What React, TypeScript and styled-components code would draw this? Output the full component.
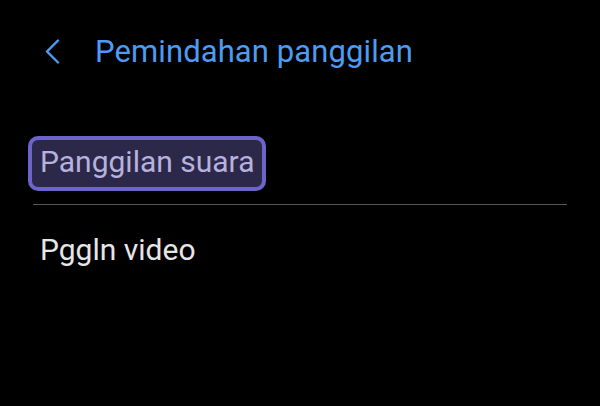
import React from "react";
import styled, { createGlobalStyle } from "styled-components";

const Global = createGlobalStyle`
  html, body { margin: 0; padding: 0; background: #000; }
  body { font-family: Roboto, "Noto Sans", sans-serif; width: 600px; height: 406px; overflow: hidden; }
`;

const Page = styled.div`
  display: flex;
  flex-direction: column;
  width: 600px;
  height: 406px;
  background: #000;
`;

const Header = styled.header`
  display: flex;
  align-items: center;
  padding: 34px 0 0 44px;
  height: 36px;
`;

const BackButton = styled.button`
  display: flex;
  align-items: center;
  justify-content: center;
  width: 17px;
  height: 36px;
  padding: 0;
  margin: 0 34px 0 0;
  background: none;
  border: none;
  color: #4b9cf2;
`;

const Title = styled.h1`
  margin: 0;
  font-family: Roboto, sans-serif;
  font-weight: 400;
  font-size: 31px;
  line-height: 36px;
  letter-spacing: 0.1px;
  color: #4b9cf2;
`;

const List = styled.div`
  display: flex;
  flex-direction: column;
  margin-top: 66px;
`;

const Item = styled.div<{ $focused?: boolean }>`
  align-self: flex-start;
  font-family: Roboto, sans-serif;
  font-size: 30px;
  line-height: 36px;
  color: ${(p) => (p.$focused ? "#b7b1de" : "#e6e6e6")};
  margin-left: ${(p) => (p.$focused ? "28px" : "40px")};
  padding: ${(p) => (p.$focused ? "4px 7px 7px 8px" : "0")};
  background: ${(p) => (p.$focused ? "#2c2849" : "transparent")};
  border: ${(p) => (p.$focused ? "4px solid #6c64c9" : "none")};
  border-radius: 10px;
`;

const Divider = styled.hr`
  margin: 13px 33px 27px 33px;
  border: none;
  height: 1px;
  background: #555;
`;

export default function App() {
  return (
    <Page>
      <Global />
      <Header>
        <BackButton aria-label="Back">
          <svg width="17" height="26" viewBox="0 0 17 26" fill="none">
            <path d="M14 1.5 L3 12.5 L14 23.5" stroke="currentColor" strokeWidth="2.4" strokeLinecap="round" strokeLinejoin="round" />
          </svg>
        </BackButton>
        <Title>Pemindahan panggilan</Title>
      </Header>
      <List>
        <Item $focused>Panggilan suara</Item>
        <Divider />
        <Item>Pggln video</Item>
      </List>
    </Page>
  );
}
